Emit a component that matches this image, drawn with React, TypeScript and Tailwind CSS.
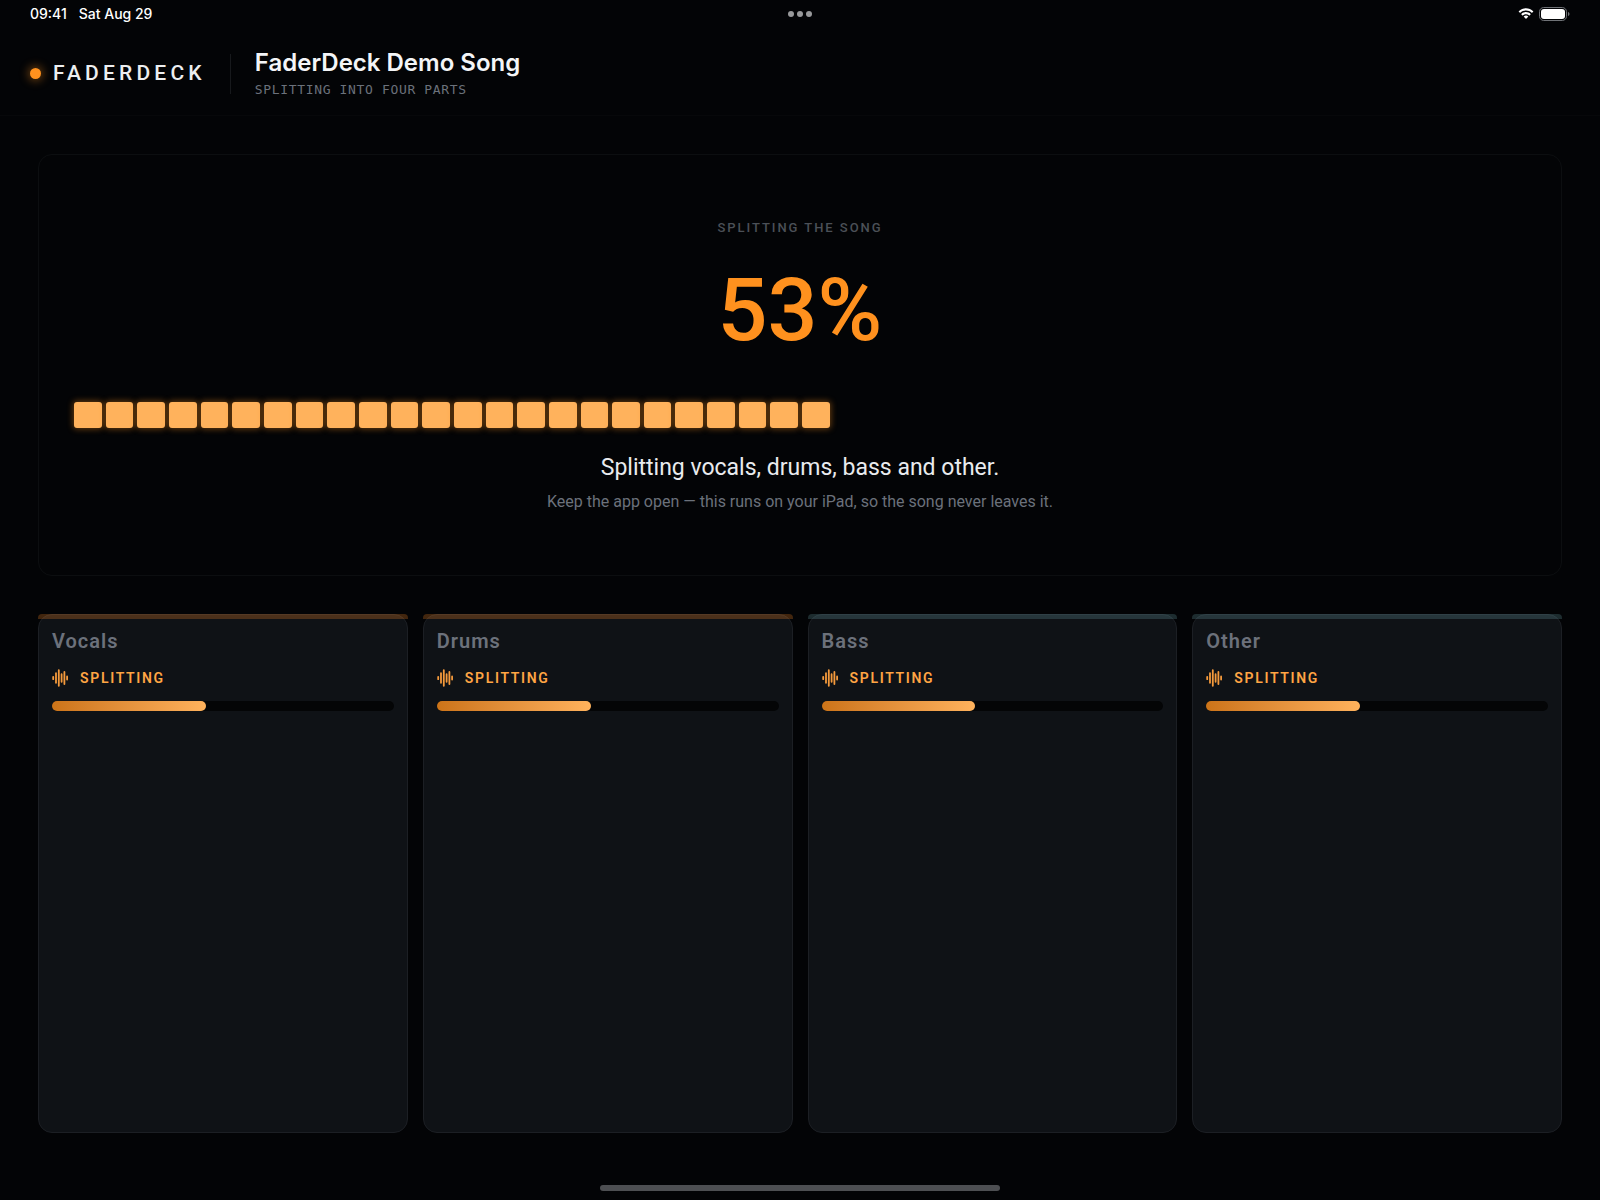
const SEGMENTS = 46;
const PERCENT = 53;

const parts = [
  { name: 'Vocals', strip: 'bg-[#ff8c28]/25' },
  { name: 'Drums', strip: 'bg-[#ff8c28]/25' },
  { name: 'Bass', strip: 'bg-[#6ca3aa]/25' },
  { name: 'Other', strip: 'bg-[#6ca3aa]/25' },
];

function WifiIcon() {
  return (
    <svg viewBox="0 0 16 12" className="h-3 w-4" fill="#fff" aria-hidden="true">
      <path d="M8 2.5c2.2 0 4.2.9 5.7 2.3.1.1.3.1.4 0l1.1-1.1c.1-.1.1-.3 0-.4C13.3 1.4 10.7.2 8 .2S2.7 1.4.8 3.3c-.1.1-.1.3 0 .4l1.1 1.1c.1.1.3.1.4 0C3.800 3.400 5.800 2.500 8 2.500z" />
      <path d="M8 6.2c1.2 0 2.3.4 3.2 1.2.1.1.3.1.4 0l1.1-1.1c.1-.1.1-.3 0-.4C11.4 4.7 9.8 4 8 4s-3.400.7-4.700 1.900c-.1.1-.1.3 0 .4l1.1 1.1c.1.1.3.1.4 0 .9-.8 2-1.2 3.2-1.2z" />
      <path d="M10.2 8.8c.1-.1.1-.3 0-.4C9.6 7.9 8.8 7.6 8 7.6s-1.6.3-2.2.8c-.1.1-.1.3 0 .4l2 2c.1.1.3.1.4 0z" />
    </svg>
  );
}

function BatteryIcon() {
  return (
    <svg viewBox="0 0 31 14" className="h-3.5 w-[31px]" aria-hidden="true">
      <rect x="0.5" y="0.5" width="27" height="13" rx="4.2" fill="none" stroke="#6f7276" />
      <rect x="2" y="2" width="24" height="10" rx="3" fill="#fff" />
      <path d="M29 5v4c.9-.3 1.5-1.1 1.5-2S29.9 5.3 29 5z" fill="#6f7276" />
    </svg>
  );
}

function WaveIcon() {
  return (
    <svg
      viewBox="0 0 16 18"
      className="h-[18px] w-4"
      fill="none"
      stroke="#f59a3c"
      strokeWidth="1.8"
      strokeLinecap="round"
      aria-hidden="true"
    >
      <path d="M1.2 7.8v2.4M4 4.2v9.6M6.8 1.2v15.6M9.6 5.2v7.6M12.4 3v12M15.100 7.400v3.200" />
    </svg>
  );
}

function StatusBar() {
  return (
    <div className="grid h-7 grid-cols-3 items-center px-[30px]">
      <div className="flex gap-3 font-['Inter',sans-serif] text-sm font-medium text-white">
        <span>09:41</span>
        <span>Sat Aug 29</span>
      </div>
      <div className="flex justify-center gap-[3px]">
        <span className="size-1.5 rounded-full bg-[#98999b]" />
        <span className="size-1.5 rounded-full bg-[#98999b]" />
        <span className="size-1.5 rounded-full bg-[#98999b]" />
      </div>
      <div className="flex items-center justify-end gap-[5px]">
        <WifiIcon />
        <BatteryIcon />
      </div>
    </div>
  );
}

function Header() {
  return (
    <header className="flex h-22 items-center border-b border-[#07080a] px-[30px] pt-1">
      <div className="flex items-center gap-3">
        <span className="size-[11px] rounded-full bg-[#ff911e] shadow-[0_0_10px_2px_rgba(255,145,30,0.4)]" />
        <span className="text-[21px] font-medium tracking-[0.2em] text-[#eceef0]">FADERDECK</span>
      </div>
      <div className="mx-6 h-10 w-px bg-[#17191c]" />
      <div>
        <h1 className="font-['Inter',sans-serif] text-2xl leading-8 font-semibold text-[#f4f5f7]">
          FaderDeck Demo Song
        </h1>
        <p className="mt-px font-['DejaVu_Sans_Mono',monospace] text-[13px] leading-5 tracking-wider text-[#6b717b]">
          SPLITTING INTO FOUR PARTS
        </p>
      </div>
    </header>
  );
}

function ProgressPanel() {
  const lit = Math.floor((SEGMENTS * PERCENT) / 100);

  return (
    <section className="flex flex-col items-center rounded-[14px] border border-[#0c0e10] px-[35px] pt-[63px] pb-[57px]">
      <h2 className="text-[13px] leading-5 font-medium tracking-[0.15em] text-[#4b5057]">
        SPLITTING THE SONG
      </h2>
      <p className="mt-5 text-[88px] leading-[104px] font-medium text-[#ff911e]">{PERCENT}%</p>
      <div
        role="progressbar"
        aria-label="Splitting the song"
        aria-valuenow={PERCENT}
        className="mt-10 flex w-full gap-1"
      >
        {Array.from({ length: SEGMENTS }, (_, i) => (
          <span
            key={i}
            className={`h-[26px] flex-1 rounded-[3px] ${
              i < lit ? 'bg-[#ffb25c] shadow-[0_0_6px_1px_rgba(255,145,30,0.4)]' : ''
            }`}
          />
        ))}
      </div>
      <p className="mt-[22px] text-[23px] leading-9 text-[#e9ebee]">
        Splitting vocals, drums, bass and other.
      </p>
      <p className="text-base leading-8 text-[#6b717b]">
        Keep the app open — this runs on your iPad, so the song never leaves it.
      </p>
    </section>
  );
}

function PartCard({ name, strip }: { name: string; strip: string }) {
  return (
    <article className="relative rounded-[14px] border border-[#1c1f24] bg-[#0f1216] px-[13px] pt-3">
      <div className={`absolute -inset-x-px -top-px h-[5px] rounded-t ${strip}`} />
      <h3 className="text-xl leading-7 font-semibold tracking-wider text-[#6c717b]">{name}</h3>
      <div className="mt-[13px] flex items-center gap-3">
        <WaveIcon />
        <span className="text-sm leading-5 font-semibold tracking-[0.12em] text-[#ffa544]">
          SPLITTING
        </span>
      </div>
      <div className="mt-[13px] h-[10px] rounded-full bg-[#040506]">
        <div className="h-full w-[45%] rounded-full bg-linear-to-r from-[#cc7418] to-[#ffb25c]" />
      </div>
    </article>
  );
}

export default function App() {
  return (
    <div className="flex min-h-screen flex-col bg-[#030406] font-['Roboto',sans-serif]">
      <StatusBar />
      <Header />
      <main className="flex grow flex-col gap-[38px] px-[38px] pt-[38px]">
        <ProgressPanel />
        <div className="grid grow grid-cols-4 gap-[15px]">
          {parts.map((part) => (
            <PartCard key={part.name} {...part} />
          ))}
        </div>
      </main>
      <div className="flex h-[67px] items-end justify-center pb-[9px]">
        <div className="h-1.5 w-1/4 rounded-full bg-[#4d4f52]" />
      </div>
    </div>
  );
}
